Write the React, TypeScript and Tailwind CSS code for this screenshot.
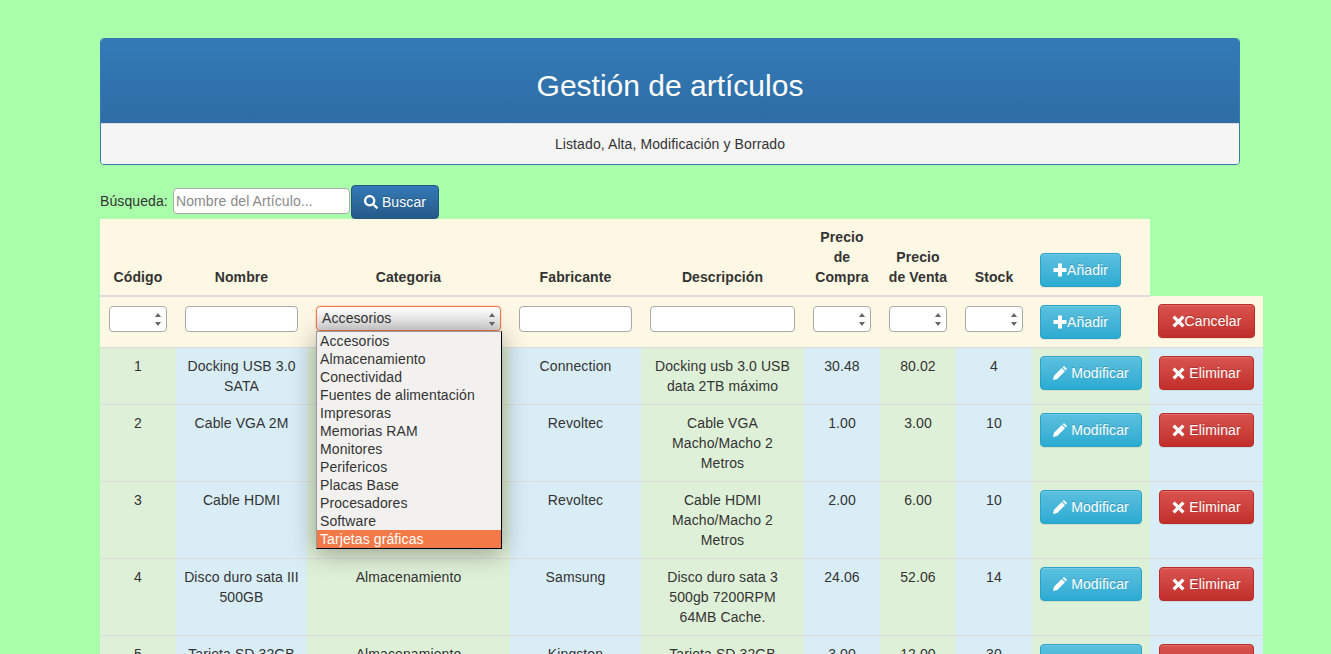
import { FaSearch } from 'react-icons/fa';

const categorias = [
  'Accesorios', 'Almacenamiento', 'Conectividad', 'Fuentes de alimentación', 'Impresoras', 'Memorias RAM',
  'Monitores', 'Perifericos', 'Placas Base', 'Procesadores', 'Software', 'Tarjetas gráficas',
];

const articulos = [
  { id: 1, nombre: 'Docking USB 3.0 SATA', categoria: 'Conectividad', fabricante: 'Connection', desc: 'Docking usb 3.0 USB data 2TB máximo', compra: '30.48', venta: '80.02', stock: 4 },
  { id: 2, nombre: 'Cable VGA 2M', categoria: 'Conectividad', fabricante: 'Revoltec', desc: 'Cable VGA Macho/Macho 2 Metros', compra: '1.00', venta: '3.00', stock: 10 },
  { id: 3, nombre: 'Cable HDMI', categoria: 'Conectividad', fabricante: 'Revoltec', desc: 'Cable HDMI Macho/Macho 2 Metros', compra: '2.00', venta: '6.00', stock: 10 },
  { id: 4, nombre: 'Disco duro sata III 500GB', categoria: 'Almacenamiento', fabricante: 'Samsung', desc: 'Disco duro sata 3 500gb 7200RPM 64MB Cache.', compra: '24.06', venta: '52.06', stock: 14 },
  { id: 5, nombre: 'Tarjeta SD 32GB', categoria: 'Almacenamiento', fabricante: 'Kingston', desc: 'Tarjeta SD 32GB', compra: '3.00', venta: '12.00', stock: 30 },
];

const btnInfo = 'inline-flex h-[34px] items-center justify-center rounded border border-[#28a4c9] bg-gradient-to-b from-[#5bc0de] to-[#2aabd2] text-white [text-shadow:0_-1px_0_rgba(0,0,0,0.2)] shadow-[inset_0_1px_0_rgba(255,255,255,0.15),0_1px_1px_rgba(0,0,0,0.075)]';
const btnDanger = 'inline-flex h-[34px] items-center justify-center rounded border border-[#b92c28] bg-gradient-to-b from-[#d9534f] to-[#c12e2a] text-white [text-shadow:0_-1px_0_rgba(0,0,0,0.2)] shadow-[inset_0_1px_0_rgba(255,255,255,0.15),0_1px_1px_rgba(0,0,0,0.075)]';
const th = 'border-b-2 border-[#ddd] bg-[#fcf8e3] p-2 text-center align-bottom font-bold';
const tdOk = 'border-t border-[#ddd] bg-[#dff0d8] p-2 text-center align-top';
const tdInfo = 'border-t border-[#ddd] bg-[#d9edf7] p-2 text-center align-top';
const field = 'h-[26px] rounded border border-[#a9a9a9] bg-white';

function PlusIcon() {
  return (
    <svg width="14" height="14" viewBox="0 0 14 14" fill="currentColor">
      <path d="M5 0.5h4v4.5h4.5v4H9v4.5H5V9H0.5V5H5z" />
    </svg>
  );
}

function CrossIcon() {
  return (
    <svg width="13" height="13" viewBox="0 0 14 14" fill="currentColor">
      <path d="M3 0.5L7 4.5L11 0.5L13.5 3L9.5 7L13.5 11L11 13.5L7 9.5L3 13.5L0.5 11L4.5 7L0.5 3z" />
    </svg>
  );
}

function PencilIcon() {
  return (
    <svg width="14" height="14" viewBox="0 0 14 14" fill="currentColor">
      <path d="M0 14L1 9.8L8.8 2L12 5.2L4.2 13zM9.6 1.2L10.4 0.4Q11 0 11.6 0.4L13.6 2.4Q14 3 13.6 3.6L12.8 4.4z" />
    </svg>
  );
}

function Spinner() {
  return (
    <span className="absolute right-[5px] top-[6px] flex flex-col gap-[5px]">
      <span className="h-0 w-0 border-x-[3.5px] border-b-[4px] border-x-transparent border-b-[#666]" />
      <span className="h-0 w-0 border-x-[3.5px] border-t-[4px] border-x-transparent border-t-[#666]" />
    </span>
  );
}

function NumberField() {
  return (
    <div className={`relative mx-auto mt-px w-[58px] ${field}`}>
      <Spinner />
    </div>
  );
}

function AddButton() {
  return (
    <button className={`${btnInfo} w-[81px]`}>
      <PlusIcon />
      Añadir
    </button>
  );
}

function CategoriaSelect() {
  return (
    <div className="relative mx-auto mt-px h-[25px] w-[185px] rounded border border-[#f0784a] bg-gradient-to-b from-white to-[#d8d8d8] pl-[5px] text-left leading-[23px] shadow-[0_0_2px_rgba(240,120,74,0.6)]">
      Accesorios
      <Spinner />
      <ul className="absolute left-[-1px] top-[24px] z-10 w-[186px] border border-b-black border-l-[#999] border-r-black border-t-[#999] bg-[#f2f1ef] shadow-[0_4px_24px_rgba(0,0,0,0.35)]">
        {categorias.map((c) => (
          <li key={c} className={`h-[18px] pl-[3px] leading-[18px] ${c === 'Tarjetas gráficas' ? 'bg-[#f37a48] text-white' : ''}`}>
            {c}
          </li>
        ))}
      </ul>
    </div>
  );
}

export default function App() {
  return (
    <div className="h-[654px] overflow-hidden bg-[#aaffaa] pl-[100px] pt-[38px] font-['Liberation_Sans',sans-serif] text-sm leading-5 tracking-[0.1px] text-[#333]">
      <div className="w-[1140px] overflow-hidden rounded border border-[#337ab7]">
        <div className="flex h-[84px] items-center justify-center bg-gradient-to-b from-[#337ab7] to-[#2e6da4] pt-[10px] text-[30px] tracking-normal text-white">
          Gestión de artículos
        </div>
        <div className="flex h-[41px] items-center justify-center border-t border-[#ddd] bg-[#f5f5f5]">
          Listado, Alta, Modificación y Borrado
        </div>
      </div>

      <div className="mt-5 flex h-[34px] items-center">
        <span className="mb-[2px] w-[73px]">Búsqueda:</span>
        <input
          placeholder="Nombre del Artículo..."
          className="mb-[2px] h-[26px] w-[177px] rounded border border-[#a9a9a9] bg-white px-[2px] placeholder:text-[#8a8a8a]"
        />
        <button className="ml-px inline-flex h-[34px] w-[88px] items-center justify-center gap-1 rounded border border-[#245580] bg-gradient-to-b from-[#337ab7] to-[#265a88] text-white [text-shadow:0_-1px_0_rgba(0,0,0,0.2)]">
          <FaSearch className="text-[14px]" />
          Buscar
        </button>
      </div>

      <table className="w-[1163px] table-fixed border-collapse">
        <colgroup>
          <col className="w-[76px]" />
          <col className="w-[131px]" />
          <col className="w-[203px]" />
          <col className="w-[131px]" />
          <col className="w-[163px]" />
          <col className="w-[76px]" />
          <col className="w-[76px]" />
          <col className="w-[76px]" />
          <col className="w-[118px]" />
          <col className="w-[113px]" />
        </colgroup>
        <thead>
          <tr>
            <th className={th}>Código</th>
            <th className={th}>Nombre</th>
            <th className={th}>Categoria</th>
            <th className={th}>Fabricante</th>
            <th className={th}>Descripción</th>
            <th className={th}>Precio de Compra</th>
            <th className={th}>Precio de Venta</th>
            <th className={th}>Stock</th>
            <th className={`${th} text-left font-normal`}>
              <AddButton />
            </th>
            <th />
          </tr>
        </thead>
        <tbody>
          <tr className="bg-[#fcf8e3]">
            <td className="p-2 text-center align-top"><NumberField /></td>
            <td className="p-2 text-center align-top"><div className={`mx-auto mt-px w-[113px] ${field}`} /></td>
            <td className="p-2 text-center align-top"><CategoriaSelect /></td>
            <td className="p-2 text-center align-top"><div className={`mx-auto mt-px w-[113px] ${field}`} /></td>
            <td className="p-2 text-center align-top"><div className={`mx-auto mt-px w-[145px] ${field}`} /></td>
            <td className="p-2 text-center align-top"><NumberField /></td>
            <td className="p-2 text-center align-top"><NumberField /></td>
            <td className="p-2 text-center align-top"><NumberField /></td>
            <td className="p-2 align-top"><AddButton /></td>
            <td className="p-2 text-center align-top">
              <button className={`${btnDanger} w-[97px]`}>
                <CrossIcon />
                Cancelar
              </button>
            </td>
          </tr>
          {articulos.map((a) => (
            <tr key={a.id}>
              <td className={tdOk}>{a.id}</td>
              <td className={tdInfo}>{a.nombre}</td>
              <td className={tdOk}>{a.categoria}</td>
              <td className={tdInfo}>{a.fabricante}</td>
              <td className={tdOk}>{a.desc}</td>
              <td className={tdInfo}>{a.compra}</td>
              <td className={tdOk}>{a.venta}</td>
              <td className={tdInfo}>{a.stock}</td>
              <td className={`${tdOk} text-left`}>
                <button className={`${btnInfo} w-[102px] gap-1`}>
                  <PencilIcon />
                  Modificar
                </button>
              </td>
              <td className={tdInfo}>
                <button className={`${btnDanger} w-[95px] gap-1`}>
                  <CrossIcon />
                  Eliminar
                </button>
              </td>
            </tr>
          ))}
        </tbody>
      </table>
    </div>
  );
}
